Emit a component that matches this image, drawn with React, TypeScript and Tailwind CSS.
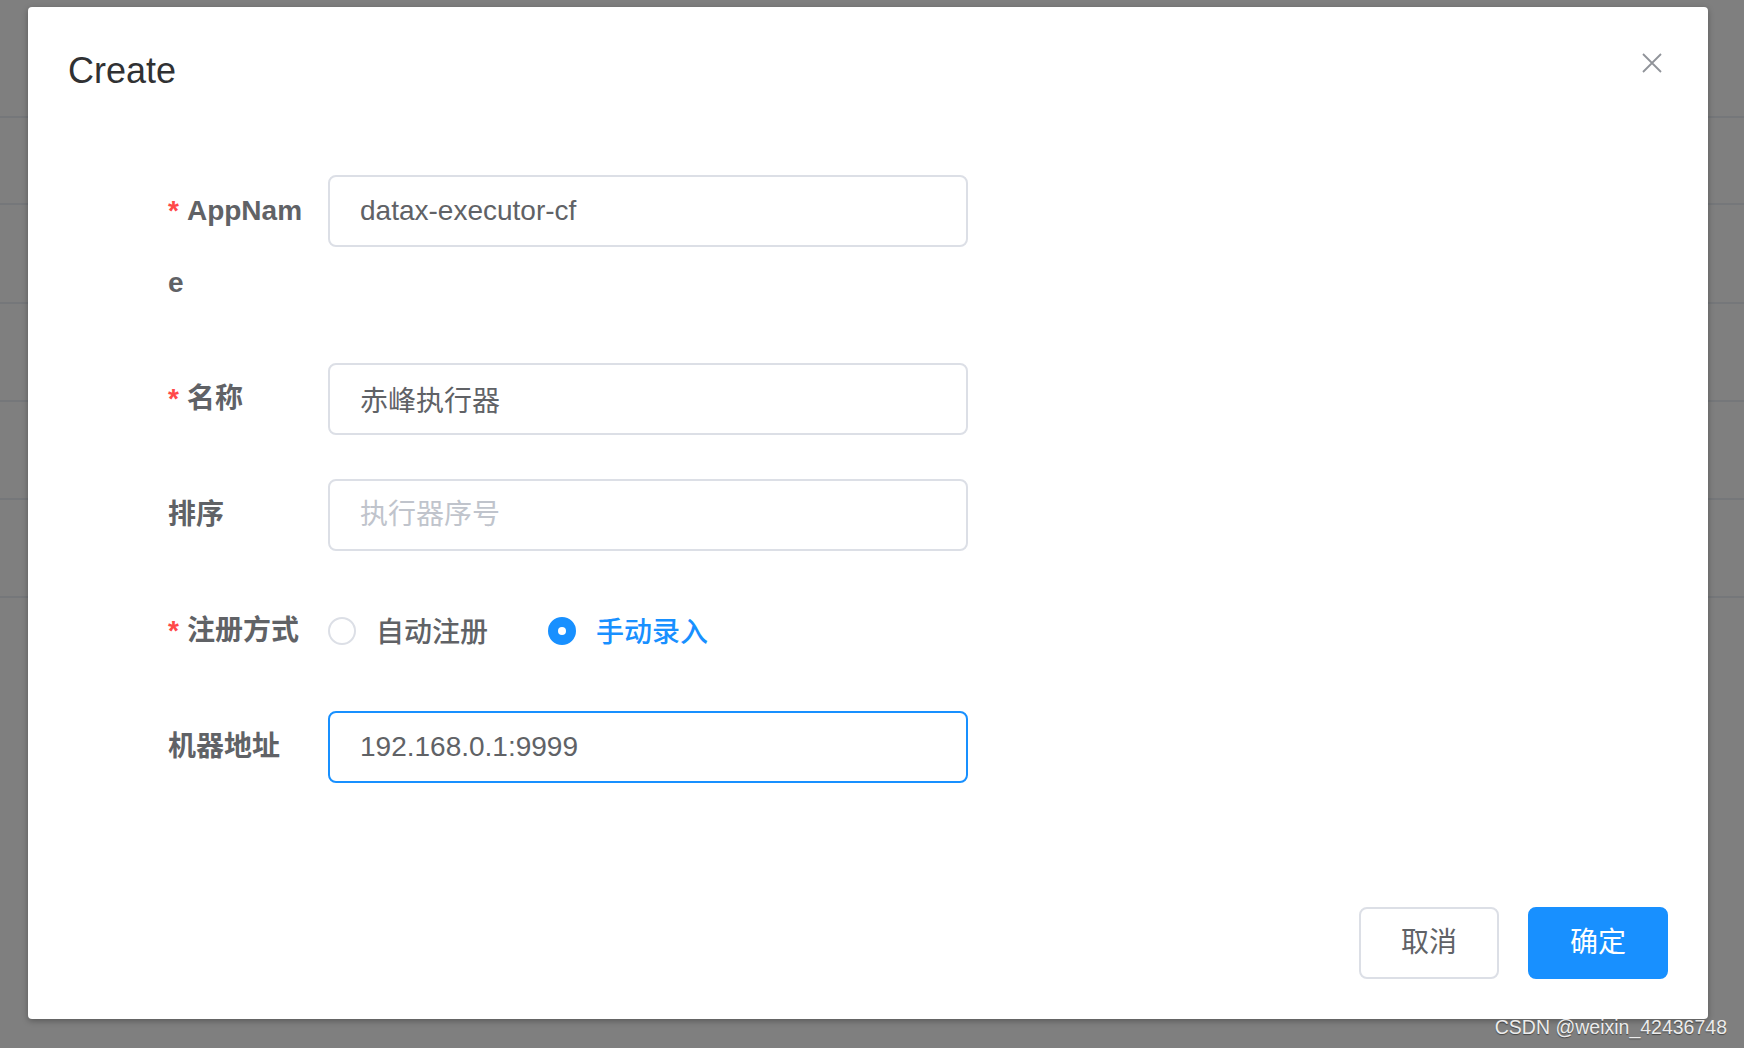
import { X } from 'lucide-react'

const rowHeights = [116, 85, 97, 96, 96, 96]

function Label({ text, required }: { text: string; required?: boolean }) {
  return (
    <label className="w-[160px] shrink-0 pr-[24px] text-[28px] leading-[72px] font-bold text-[#606266] break-all">
      {required && <span className="mr-[8px] text-[#ff4949]">*</span>}
      {text}
    </label>
  )
}

function Radio({ label, checked }: { label: string; checked?: boolean }) {
  return (
    <label className="flex items-center mr-[60px] cursor-pointer">
      <span
        className={`w-[28px] h-[28px] rounded-full border-2 flex items-center justify-center ${checked ? 'bg-[#1890ff] border-[#1890ff]' : 'bg-white border-[#dcdfe6]'}`}
      >
        {checked && <span className="w-[8px] h-[8px] rounded-full bg-white" />}
      </span>
      <span className={`pl-[20px] pt-[3px] text-[28px] font-medium ${checked ? 'text-[#1890ff]' : 'text-[#606266]'}`}>{label}</span>
    </label>
  )
}

export default function App() {
  return (
    <div className="relative w-[1744px] h-[1048px] overflow-hidden bg-white font-['Liberation_Sans','Noto_Sans_CJK_SC',sans-serif]">
      {/* page behind the dialog */}
      <div>
        {rowHeights.map((h, i) => (
          <div key={i} className="border-b-2 border-[#ebeef5]" style={{ height: h + 2 }} />
        ))}
      </div>

      {/* mask */}
      <div className="absolute inset-0 bg-black/50" />

      {/* dialog */}
      <div className="absolute inset-0 pt-[7px] pl-[28px]">
        <div className="relative w-[1680px] bg-white rounded-[4px] shadow-[0_2px_6px_rgba(0,0,0,0.3)]">
          <div className="px-[40px] pt-[40px] pb-[20px]">
            <span className="text-[36px] leading-[48px] text-[#303133]">Create</span>
            <button className="absolute top-[40px] right-[40px] w-[32px] h-[32px] flex items-center justify-center text-[#909399]">
              <svg width="20" height="20" viewBox="0 0 20 20" fill="none" stroke="currentColor" strokeWidth="1.8">
                <path d="M1 1L19 19M19 1L1 19" />
              </svg>
            </button>
          </div>

          <div className="px-[40px] py-[60px]">
            <form className="ml-[100px]">
              <div className="flex mb-[44px]">
                <Label text="AppName" required />
                <input
                  defaultValue="datax-executor-cf"
                  className="w-[640px] h-[72px] px-[30px] border-2 border-[#dcdfe6] rounded-[8px] text-[28px] text-[#606266] outline-none"
                />
              </div>
              <div className="flex mb-[44px]">
                <Label text="名称" required />
                <input
                  defaultValue="赤峰执行器"
                  className="w-[640px] h-[72px] px-[30px] border-2 border-[#dcdfe6] rounded-[8px] text-[28px] text-[#606266] outline-none"
                />
              </div>
              <div className="flex mb-[44px]">
                <Label text="排序" />
                <input
                  placeholder="执行器序号"
                  className="w-[640px] h-[72px] px-[30px] border-2 border-[#dcdfe6] rounded-[8px] text-[28px] text-[#606266] placeholder:text-[#c0c4cc] outline-none"
                />
              </div>
              <div className="flex mb-[44px]">
                <Label text="注册方式" required />
                <div className="flex items-center h-[72px]">
                  <Radio label="自动注册" />
                  <Radio label="手动录入" checked />
                </div>
              </div>
              <div className="flex mb-[44px]">
                <Label text="机器地址" />
                <input
                  defaultValue="192.168.0.1:9999"
                  className="w-[640px] h-[72px] px-[30px] border-2 border-[#1890ff] rounded-[8px] text-[28px] text-[#606266] outline-none"
                />
              </div>
            </form>
          </div>

          <div className="px-[40px] pt-[20px] pb-[40px] flex justify-end gap-[29px]">
            <button className="w-[140px] h-[72px] border-2 border-[#dcdfe6] rounded-[8px] bg-white text-[28px] text-[#606266]">取消</button>
            <button className="w-[140px] h-[72px] border-2 border-[#1890ff] rounded-[8px] bg-[#1890ff] text-[28px] text-white">确定</button>
          </div>
        </div>
      </div>

      {/* watermark */}
      <div className="absolute right-[17px] top-[1016px] text-[19.5px] leading-[22px] text-[#ececec] [text-shadow:0_1px_1px_rgba(0,0,0,0.45)]">
        CSDN @weixin_42436748
      </div>
    </div>
  )
}
